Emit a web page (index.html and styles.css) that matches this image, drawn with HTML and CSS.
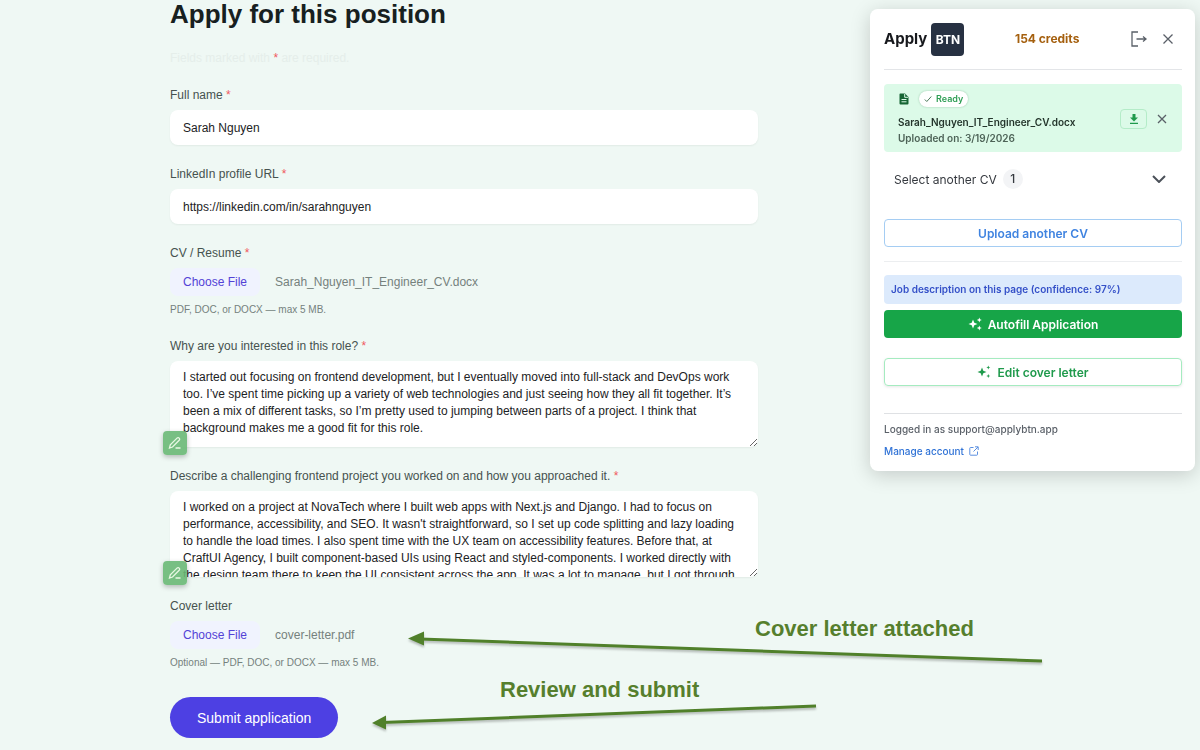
FILE: index.html
```html
<!DOCTYPE html>
<html lang="en">
<head>
    <meta charset="UTF-8">
    <meta name="viewport" content="width=device-width, initial-scale=1.0">
    <title>Apply for this position</title>
    <link rel="stylesheet" href="styles.css">
</head>
<body>

<main class="page">
    <h1>Apply for this position</h1>
    <p class="required-note">Fields marked with <span class="req">*</span> are required.</p>

    <form class="form">
        <div class="field">
            <label for="fullName">Full name <span class="req">*</span></label>
            <input type="text" id="fullName" name="fullName" value="Sarah Nguyen" required>
        </div>
        <div class="field">
            <label for="linkedin">LinkedIn profile URL <span class="req">*</span></label>
            <input type="text" id="linkedin" name="linkedin" value="https://linkedin.com/in/sarahnguyen" required>
        </div>
        <div class="field">
            <label for="cv">CV / Resume <span class="req">*</span></label>
            <div class="file-row">
                <input type="file" id="cv" name="cv" class="file-input">
                <label for="cv" class="file-btn">Choose File</label>
                <span class="file-name">Sarah_Nguyen_IT_Engineer_CV.docx</span>
            </div>
            <p class="hint">PDF, DOC, or DOCX — max 5 MB.</p>
        </div>
        <div class="field">
            <label for="why">Why are you interested in this role? <span class="req">*</span></label>
            <textarea id="why" name="why">I started out focusing on frontend development, but I eventually moved into full-stack and DevOps work too. I’ve spent time picking up a variety of web technologies and just seeing how they all fit together. It’s been a mix of different tasks, so I’m pretty used to jumping between parts of a project. I think that background makes me a good fit for this role.</textarea>
            <button type="button" class="edit-btn" aria-label="Edit answer">
                <svg width="14" height="14" viewBox="0 0 14 14"><path d="M1.500 12l.8-3.200 6.700-6.700a1.500 1.500 0 0 1 2.200 2.200L4.500 11zM7.500 12H12.500"/></svg>
            </button>
        </div>
        <div class="field">
            <label for="project">Describe a challenging frontend project you worked on and how you approached it. <span class="req">*</span></label>
            <textarea id="project" name="project">I worked on a project at NovaTech where I built web apps with Next.js and Django. I had to focus on performance, accessibility, and SEO. It wasn't straightforward, so I set up code splitting and lazy loading to handle the load times. I also spent time with the UX team on accessibility features. Before that, at CraftUI Agency, I built component-based UIs using React and styled-components. I worked directly with the design team there to keep the UI consistent across the app. It was a lot to manage, but I got through</textarea>
            <button type="button" class="edit-btn" aria-label="Edit answer">
                <svg width="14" height="14" viewBox="0 0 14 14"><path d="M1.500 12l.8-3.200 6.700-6.700a1.500 1.500 0 0 1 2.200 2.200L4.500 11zM7.500 12H12.500"/></svg>
            </button>
        </div>
        <div class="field">
            <label for="letter">Cover letter</label>
            <div class="file-row">
                <input type="file" id="letter" name="letter" class="file-input">
                <label for="letter" class="file-btn">Choose File</label>
                <span class="file-name">cover-letter.pdf</span>
            </div>
            <p class="hint">Optional — PDF, DOC, or DOCX — max 5 MB.</p>
        </div>
        <button type="submit" class="submit-btn">Submit application</button>
    </form>
</main>

<!-- callouts drawn over the page -->
<svg class="arrows" width="680" height="120" viewBox="0 0 680 120" aria-hidden="true">
    <path class="line" d="M50 19L672 41M12 102.500L446 86"/>
    <path class="head" d="M38 18.500l16-7v14zM2 103l14-7.500v14z"/>
</svg>
<span class="note note-letter">Cover letter attached</span>
<span class="note note-submit">Review and submit</span>

<aside class="panel">
    <header class="panel-header">
        <div class="brand">Apply <span class="brand-box">BTN</span></div>
        <span class="credits">154 credits</span>
        <div class="header-actions">
            <button type="button" class="icon-btn" aria-label="Log out">
                <svg width="18" height="18" viewBox="0 0 18 18"><path d="M8 2H2v14h6M6.500 9h9.500M13 6.500l3 2.500-3 2.500"/></svg>
            </button>
            <button type="button" class="icon-btn" aria-label="Close">
                <svg width="12" height="12" viewBox="0 0 12 12"><path d="M1.500 1.500l9 9M10.500 1.500l-9 9"/></svg>
            </button>
        </div>
    </header>

    <section class="cv-card">
        <div class="cv-info">
            <div class="cv-status">
                <svg width="12" height="12" viewBox="0 0 12 12"><path fill="#166534" d="M2.300.500H7l3.500 3.500v6.500a1 1 0 0 1-1 1h-7a1 1 0 0 1-1-1v-9a1 1 0 0 1 .8-1z"/><path fill="none" stroke="#dcfae8" d="M6.700 1v3.300H10M3.500 6.500h5M3.500 8.800h5"/></svg>
                <span class="ready">
                    <svg width="8" height="8" viewBox="0 0 8 8"><path d="M.8 4.500l2 2L7.300 1.500"/></svg>
                    Ready
                </span>
            </div>
            <p class="cv-name">Sarah_Nguyen_IT_Engineer_CV.docx</p>
            <p class="cv-date">Uploaded on: 3/19/2026</p>
        </div>
        <button type="button" class="download-btn" aria-label="Download CV">
            <svg width="10" height="12" viewBox="0 0 10 12"><path d="M3.500 1h3v3.500H9L5 8.500 1 4.500h2.500zM1 9.800h8V11H1z"/></svg>
        </button>
        <button type="button" class="icon-btn" aria-label="Remove CV">
            <svg width="10" height="10" viewBox="0 0 10 10"><path d="M1 1l8 8M9 1L1 9"/></svg>
        </button>
    </section>

    <button type="button" class="select-cv">
        Select another CV <span class="count">1</span>
        <svg width="14" height="8" viewBox="0 0 14 8"><path d="M1 1l6 6 6-6"/></svg>
    </button>

    <button type="button" class="btn btn-upload">Upload another CV</button>

    <hr>

    <p class="job-info">Job description on this page (confidence: 97%)</p>
    <button type="button" class="btn btn-autofill">
        <svg width="14" height="14" viewBox="0 0 14 14"><path d="M5 2.500l1.300 3.200L9.500 7 6.300 8.300 5 11.500 3.700 8.300.5 7l3.200-1.300zM11.300.5l.7 1.800 1.800.7-1.800.7-.7 1.800-.7-1.800L8.800 3l1.800-.7zM11.300 8.500l.7 1.800 1.800.7-1.800.7-.7 1.800-.7-1.800-1.800-.7 1.800-.7z"/></svg>
        Autofill Application
    </button>
    <button type="button" class="btn btn-edit">
        <svg width="14" height="14" viewBox="0 0 14 14"><path d="M5 2.500l1.300 3.200L9.500 7 6.300 8.300 5 11.500 3.700 8.300.5 7l3.200-1.300zM11.300.5l.6 1.400 1.400.6-1.400.6-.6 1.400-.6-1.400-1.400-.6 1.400-.6zM11.300 9l.6 1.400 1.400.6-1.400.6-.6 1.400-.6-1.400-1.400-.6 1.400-.6z"/></svg>
        Edit cover letter
    </button>

    <footer class="panel-footer">
        <p>Logged in as support@applybtn.app</p>
        <a href="#">Manage account
            <svg width="10" height="10" viewBox="0 0 10 10"><path d="M4.500 1.500h-3a.7.7 0 0 0-.7.7v6.300c0 .4.300.7.7.7h6.300c.4 0 .7-.3.7-.7v-3M6 .8h3.200V4M9 1L4.500 5.500"/></svg>
        </a>
    </footer>
</aside>

</body>
</html>
```

FILE: styles.css
```css
* {
    box-sizing: border-box;
}
body {
    margin: 0;
    font-family: "Liberation Sans", Arial, sans-serif;
    font-size: 12px;
    line-height: 16px;
    color: #1c2526;
    background-color: #eff8f4;
}
h1, p {
    margin: 0;
}
button, input, textarea {
    font-family: inherit;
    font-size: 12px;
}
button {
    padding: 0;
    border: none;
    background: none;
    cursor: pointer;
}
svg {
    display: block;
    flex-shrink: 0;
}

/* application form */
.page {
    max-width: 758px;
    padding: 0 0 12px 170px;
}
h1 {
    font-size: 26px;
    line-height: 28px;
    color: #17201f;
}
.required-note {
    margin: 22px 0 21px;
    color: #e5eeea;
}
.req {
    color: #ef5a5f;
}
.form {
    display: flex;
    flex-direction: column;
    gap: 21px;
}
.field {
    position: relative;
    display: flex;
    flex-direction: column;
    gap: 7px;
    color: #46524f;
}
input[type="text"], textarea {
    width: 100%;
    border: none;
    border-radius: 8px;
    background-color: #fff;
    color: #1c2224;
    box-shadow: 0 1px 2px rgba(0, 40, 20, 0.06);
}
input[type="text"] {
    height: 35px;
    padding: 0 13px;
}
textarea {
    height: 86px;
    padding: 8px 13px;
    line-height: 17px;
    resize: vertical;
    scrollbar-width: none;
}
.file-row {
    display: flex;
    align-items: center;
    gap: 15px;
}
.file-input {
    position: absolute;
    width: 1px;
    height: 1px;
    opacity: 0;
}
.file-btn {
    padding: 6px 13px;
    border-radius: 8px;
    background-color: #f0f3fe;
    color: #5342d6;
    cursor: pointer;
}
.file-name {
    color: #75817d;
}
.hint {
    font-size: 10px;
    line-height: 14px;
    color: #75817d;
}
.edit-btn {
    position: absolute;
    left: -7px;
    bottom: -8px;
    display: flex;
    align-items: center;
    justify-content: center;
    width: 24px;
    height: 24px;
    border-radius: 4px;
    background-color: rgba(105, 184, 117, 0.9);
    box-shadow: 0 2px 5px rgba(0, 0, 0, 0.25);
}
.edit-btn svg {
    fill: none;
    stroke: #e9f8e4;
    stroke-width: 1.3;
}
.submit-btn {
    align-self: flex-start;
    height: 41px;
    margin-top: 6px;
    padding: 0 27px;
    border-radius: 21px;
    background-color: #4d40e3;
    color: #fff;
    font-size: 14px;
}

/* callouts */
.arrows {
    position: absolute;
    left: 370px;
    top: 620px;
    filter: drop-shadow(0 2px 1px rgba(0, 0, 0, 0.25));
}
.arrows .line {
    fill: none;
    stroke: #50802a;
    stroke-width: 3;
}
.arrows .head {
    fill: #50802a;
}
.note {
    position: absolute;
    font-size: 22px;
    line-height: 26px;
    font-weight: bold;
    color: #567f2d;
    white-space: nowrap;
}
.note-letter {
    left: 755px;
    top: 616px;
}
.note-submit {
    left: 500px;
    top: 677px;
}

/* extension panel */
.panel {
    position: fixed;
    top: 9px;
    right: 5px;
    display: flex;
    flex-direction: column;
    width: 325px;
    padding: 0 13px 12px 14px;
    border-radius: 8px;
    background-color: #fff;
    box-shadow: 0 4px 20px rgba(0, 0, 0, 0.18);
    font-family: Inter, sans-serif;
}
.panel-header {
    display: flex;
    align-items: center;
    justify-content: space-between;
    height: 61px;
    border-bottom: 1px solid #e3e5e8;
}
.brand {
    display: flex;
    align-items: center;
    gap: 4px;
    font-size: 15px;
    font-weight: 700;
    color: #17191d;
}
.brand-box {
    width: 33px;
    border-radius: 4px;
    background-color: #273142;
    color: #fff;
    font-size: 12px;
    line-height: 33px;
    text-align: center;
}
.credits {
    font-weight: 700;
    color: #a5600f;
}
.header-actions {
    display: flex;
    align-items: center;
    gap: 14px;
    padding-right: 8px;
}
.icon-btn svg {
    fill: none;
    stroke: #5a6068;
    stroke-width: 1.3;
}
.cv-card {
    display: flex;
    align-items: center;
    gap: 10px;
    margin-top: 14px;
    padding: 7px 15px 6px 14px;
    border-radius: 4px;
    background-color: #dcfae8;
}
.cv-info {
    flex: 1;
    font-size: 10px;
    font-weight: 600;
}
.cv-status {
    display: flex;
    align-items: center;
    gap: 9px;
    margin-bottom: 7px;
}
.ready {
    display: flex;
    align-items: center;
    gap: 4px;
    padding: 0 5px;
    border-radius: 8px;
    background-color: #fff;
    box-shadow: 0 0 2px rgba(22, 101, 52, 0.35);
    color: #2f9e55;
    font-size: 9px;
}
.ready svg {
    fill: none;
    stroke: #4b7a5b;
}
.cv-name {
    color: #24352c;
}
.cv-date {
    color: #4d6357;
}
.download-btn {
    display: flex;
    align-items: center;
    justify-content: center;
    width: 27px;
    height: 20px;
    border: 1px solid #b4ecc8;
    border-radius: 4px;
}
.download-btn svg {
    fill: #1f9a4c;
}
.select-cv {
    display: flex;
    align-items: center;
    gap: 6px;
    height: 20px;
    margin: 17px 0 30px;
    padding: 0 16px 0 10px;
    color: #35393f;
}
.count {
    width: 20px;
    border-radius: 10px;
    background-color: #f3f4f6;
    font-weight: 500;
    line-height: 20px;
}
.select-cv svg {
    margin-left: auto;
    fill: none;
    stroke: #4b5159;
    stroke-width: 2;
}
.btn {
    display: flex;
    align-items: center;
    justify-content: center;
    gap: 6px;
    height: 28px;
    border-radius: 4px;
    font-weight: 600;
}
.btn svg {
    fill: currentColor;
}
.btn-upload {
    border: 1px solid #a5cdf3;
    color: #3f83e0;
}
hr {
    width: 100%;
    margin: 14px 0 13px;
    border: none;
    border-top: 1px solid #eceef0;
}
.job-info {
    padding: 7px;
    border-radius: 4px;
    background-color: #dceafc;
    color: #3450c8;
    font-size: 10px;
    line-height: 15px;
    font-weight: 600;
}
.btn-autofill {
    margin-top: 6px;
    background-color: #17a548;
    color: #fff;
}
.btn-edit {
    margin-top: 20px;
    border: 1px solid #a5ebc0;
    box-shadow: 0 1px 3px rgba(0, 0, 0, 0.1);
    color: #1f9a4c;
}
.panel-footer {
    display: flex;
    flex-direction: column;
    align-items: flex-start;
    gap: 6px;
    margin-top: 27px;
    padding-top: 7px;
    border-top: 1px solid #dfe1e4;
    font-size: 10px;
    font-weight: 500;
    color: #5a6068;
}
.panel-footer a {
    display: flex;
    align-items: center;
    gap: 5px;
    color: #2f72d6;
    text-decoration: none;
}
.panel-footer svg {
    fill: none;
    stroke: #5a8fe0;
}
```
